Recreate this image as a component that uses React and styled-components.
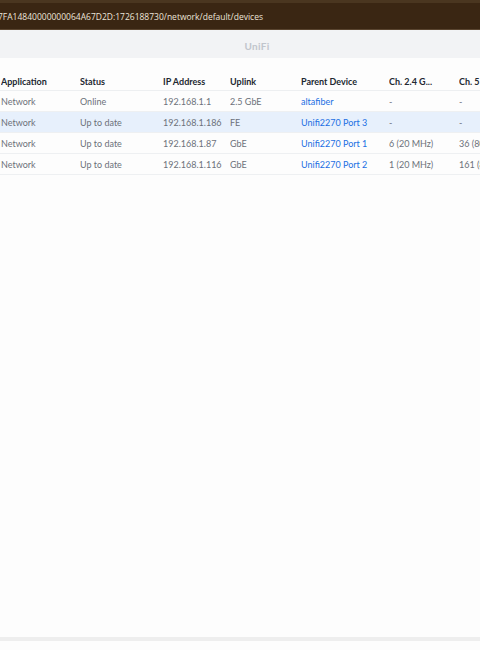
import React from 'react';
import styled, { createGlobalStyle } from 'styled-components';

const GlobalStyle = createGlobalStyle`
  html, body {
    margin: 0;
    padding: 0;
    background: #fdfdfd;
  }
  body {
    font-family: Lato, "Noto Sans", sans-serif;
    overflow: hidden;
  }
`;

const Page = styled.div`
  display: flex;
  flex-direction: column;
  width: 480px;
  height: 650px;
  overflow: hidden;
`;

const AddressBar = styled.div`
  height: 26px;
  background: #3a2613;
  border-top: 3px solid #4a3620;
  border-bottom: 1px solid #5a4530;
  display: flex;
  align-items: center;
  overflow: hidden;
  white-space: nowrap;
`;

const Url = styled.span`
  color: #ece4da;
  font-family: "Open Sans", sans-serif;
  font-size: 8.5px;
  margin-left: -2px;
`;

const TitleBar = styled.div`
  height: 28px;
  box-sizing: border-box;
  padding-top: 3px;
  background: #f2f3f5;
  display: flex;
  align-items: center;
  justify-content: center;
  padding-left: 34px;
`;

const Title = styled.span`
  color: #c1c5cc;
  font-size: 10px;
  font-weight: 700;
  letter-spacing: 0.3px;
`;

const Content = styled.div`
  flex: 1;
  padding-top: 14px;
`;

const Table = styled.div`
  display: flex;
  flex-direction: column;
  width: 520px;
`;

const Row = styled.div`
  display: grid;
  grid-template-columns: 79px 83px 67px 71px 88px 70px 62px;
  align-items: center;
  height: 20px;
  padding-left: 1px;
  border-bottom: 1px solid #eef0f2;
  background: ${p => (p.$active ? '#e7f0fc' : 'transparent')};
`;

const HeadRow = styled(Row)`
  height: 18px;
  border-bottom: 1px solid #edeff1;
`;

const Th = styled.div`
  font-size: 9px;
  font-weight: 700;
  color: #222831;
  white-space: nowrap;
  overflow: hidden;
`;

const Td = styled.div`
  font-size: 9px;
  color: ${p => (p.$link ? '#1b6fe3' : '#6c717a')};
  white-space: nowrap;
  overflow: hidden;
`;

const Footer = styled.div`
  height: 4px;
  background: #eeeeee;
  margin-bottom: 9px;
`;

const rows = [
  ['Network', 'Online', '192.168.1.1', '2.5 GbE', 'altafiber', '-', '-'],
  ['Network', 'Up to date', '192.168.1.186', 'FE', 'Unifi2270 Port 3', '-', '-'],
  ['Network', 'Up to date', '192.168.1.87', 'GbE', 'Unifi2270 Port 1', '6 (20 MHz)', '36 (80 MHz)'],
  ['Network', 'Up to date', '192.168.1.116', 'GbE', 'Unifi2270 Port 2', '1 (20 MHz)', '161 (80 MHz)'],
];

const headers = ['Application', 'Status', 'IP Address', 'Uplink', 'Parent Device', 'Ch. 2.4 G...', 'Ch. 5 GHz'];

export default function App() {
  return (
    <Page>
      <GlobalStyle />
      <AddressBar>
        <Url>7FA14840000000064A67D2D:1726188730/network/default/devices</Url>
      </AddressBar>
      <TitleBar>
        <Title>UniFi</Title>
      </TitleBar>
      <Content>
        <Table>
          <HeadRow>
            {headers.map(h => <Th key={h}>{h}</Th>)}
          </HeadRow>
          {rows.map((r, i) => (
            <Row key={i} $active={i === 1}>
              {r.map((c, j) => <Td key={j} $link={j === 4}>{c}</Td>)}
            </Row>
          ))}
        </Table>
      </Content>
      <Footer />
    </Page>
  );
}
